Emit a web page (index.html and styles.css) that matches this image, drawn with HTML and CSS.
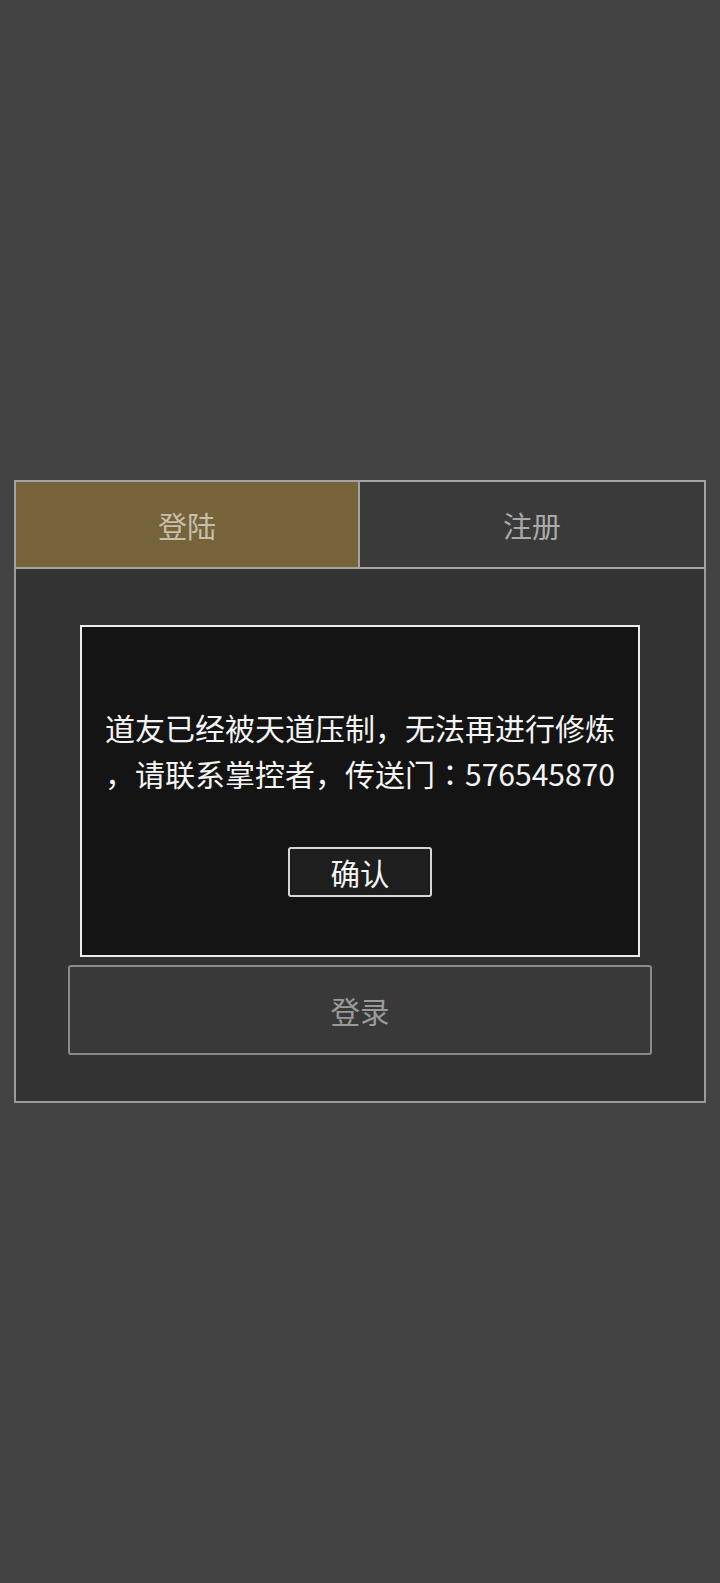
FILE: index.html
```html
<!DOCTYPE html>
<html lang="zh-CN">
<head>
<meta charset="utf-8">
<title>登陆</title>
<link rel="stylesheet" href="styles.css">
</head>
<body>
<div class="page">
  <div class="panel">
    <div class="tabs">
      <div class="tab tab-active">登陆</div>
      <div class="tab">注册</div>
    </div>
    <div class="content">
      <div class="dialog">
        <p class="dialog-text">道友已经被天道压制，无法再进行修炼<br>，请联系掌控者，传送门<span class="colon" lang="ja">：</span>576545870</p>
        <div class="confirm">确认</div>
      </div>
      <div class="login-btn">登录</div>
    </div>
  </div>
</div>
</body>
</html>
```
FILE: styles.css
```css
html, body {
  margin: 0;
  padding: 0;
  background: #434343;
}
body {
  font-family: "Noto Sans CJK SC", "Noto Sans", sans-serif;
}
.page {
  min-height: 1583px;
  box-sizing: border-box;
  display: flex;
  flex-direction: column;
  justify-content: center;
  padding: 0 14px;
}
.panel {
  width: 692px;
  height: 623px;
  display: flex;
  flex-direction: column;
}
.tabs {
  display: grid;
  grid-template-columns: 1fr 1fr;
  height: 89px;
  box-sizing: border-box;
  border: 2px solid #a3a3a3;
}
.tab {
  display: flex;
  align-items: center;
  justify-content: center;
  font-size: 29px;
  color: #a9a9a9;
  background: #3a3a3a;
}
.tab-active {
  background: #766339;
  color: #c6bfae;
  border-right: 2px solid #a3a3a3;
}
.content {
  flex: 1;
  box-sizing: border-box;
  border: 2px solid #9c9c9c;
  border-top: 0;
  background: #333333;
  display: flex;
  flex-direction: column;
  align-items: center;
  padding-top: 56px;
}
.dialog {
  width: 560px;
  height: 332px;
  box-sizing: border-box;
  border: 2px solid #ececec;
  background: #141414;
  display: flex;
  flex-direction: column;
  align-items: center;
  padding-top: 77px;
}
.dialog-text {
  margin: 0;
  font-size: 30px;
  line-height: 46px;
  color: #f4f4f4;
  text-align: center;
  white-space: nowrap;
}
.colon {
  font-family: "Noto Sans CJK JP", "Noto Sans CJK SC", sans-serif;
}
.confirm {
  margin-top: 51px;
  width: 144px;
  height: 50px;
  box-sizing: border-box;
  border: 2px solid #d8d8d8;
  border-radius: 3px;
  background: #1e1e1e;
  color: #f4f4f4;
  font-size: 29.5px;
  display: flex;
  align-items: center;
  justify-content: center;
}
.login-btn {
  margin-top: 8px;
  width: 584px;
  height: 90px;
  box-sizing: border-box;
  border: 2px solid #8a8a8a;
  border-radius: 3px;
  background: #393939;
  color: #9a9a9a;
  font-size: 29.5px;
  display: flex;
  align-items: center;
  justify-content: center;
}
```
